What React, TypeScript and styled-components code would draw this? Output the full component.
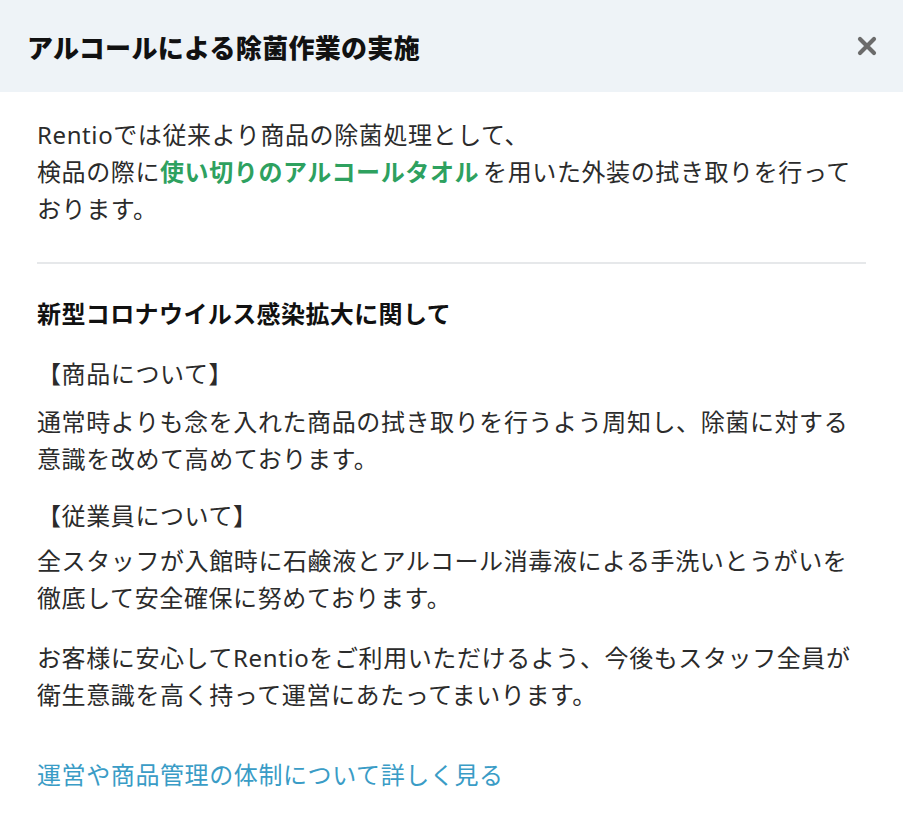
import React from "react";
import styled, { createGlobalStyle } from "styled-components";

const GlobalStyle = createGlobalStyle`
  html, body {
    margin: 0;
    padding: 0;
    background: #ffffff;
  }
  body {
    font-family: "Noto Sans", "Noto Sans CJK JP", sans-serif;
    color: #2b2b2b;
  }
`;

const Modal = styled.div`
  width: 903px;
  min-height: 821px;
  background: #ffffff;
  display: flex;
  flex-direction: column;
`;

const Header = styled.header`
  height: 92px;
  box-sizing: border-box;
  background: #eef3f7;
  display: flex;
  align-items: center;
  justify-content: space-between;
  padding: 0 25px 0 27px;
`;

const Title = styled.h1`
  margin: 0;
  font-family: "Noto Sans CJK JP", sans-serif;
  font-size: 26px;
  font-weight: 900;
  letter-spacing: 0.3px;
  color: #111111;
`;

const CloseButton = styled.button`
  border: none;
  background: transparent;
  padding: 0;
  width: 22px;
  height: 22px;
  display: flex;
  align-items: center;
  justify-content: center;
  cursor: pointer;
`;

const Body = styled.div`
  padding: 24px 37px 0 37px;
  display: flex;
  flex-direction: column;
  font-family: "Noto Sans", "Noto Sans CJK JP", sans-serif;
  font-size: 24px;
  letter-spacing: 0.6px;
  line-height: 37px;
`;

const Paragraph = styled.p<{ $mt?: number }>`
  margin: ${(p) => p.$mt ?? 0}px 0 0 0;
`;

const Highlight = styled.strong`
  color: #2ea15f;
  font-weight: 700;
  margin-right: 4px;
`;

const Divider = styled.hr`
  border: none;
  border-top: 2px solid #e6e8ea;
  margin: 35px 0 30px 0;
`;

const SectionTitle = styled.h2`
  margin: 0;
  font-family: "Noto Sans CJK JP", sans-serif;
  font-size: 24px;
  font-weight: 700;
  letter-spacing: 0.4px;
  line-height: 37px;
  color: #111111;
`;

const SubHead = styled.p<{ $mt: number }>`
  margin: ${(p) => p.$mt}px 0 0 0;
`;

const MoreLink = styled.a`
  margin-top: 43px;
  color: #3a9cc6;
  text-decoration: none;
  cursor: pointer;
`;

export default function App() {
  return (
    <>
      <GlobalStyle />
      <Modal>
        <Header>
          <Title>アルコールによる除菌作業の実施</Title>
          <CloseButton aria-label="close">
            <svg width="20" height="20" viewBox="0 0 20 20">
              <path
                d="M3 3 L17 17 M17 3 L3 17"
                stroke="#6b6b6b"
                strokeWidth="4.2"
                strokeLinecap="round"
              />
            </svg>
          </CloseButton>
        </Header>
        <Body>
          <Paragraph>
            Rentioでは従来より商品の除菌処理として、
            <br />
            検品の際に<Highlight>使い切りのアルコールタオル</Highlight>を用いた外装の拭き取りを行って
            <br />
            おります。
          </Paragraph>
          <Divider />
          <SectionTitle>新型コロナウイルス感染拡大に関して</SectionTitle>
          <SubHead $mt={24}>【商品について】</SubHead>
          <Paragraph $mt={11}>
            通常時よりも念を入れた商品の拭き取りを行うよう周知し、除菌に対する
            <br />
            意識を改めて高めております。
          </Paragraph>
          <SubHead $mt={20}>【従業員について】</SubHead>
          <Paragraph $mt={8}>
            全スタッフが入館時に石鹸液とアルコール消毒液による手洗いとうがいを
            <br />
            徹底して安全確保に努めております。
          </Paragraph>
          <Paragraph $mt={23}>
            お客様に安心してRentioをご利用いただけるよう、今後もスタッフ全員が
            <br />
            衛生意識を高く持って運営にあたってまいります。
          </Paragraph>
          <MoreLink>運営や商品管理の体制について詳しく見る</MoreLink>
        </Body>
      </Modal>
    </>
  );
}
